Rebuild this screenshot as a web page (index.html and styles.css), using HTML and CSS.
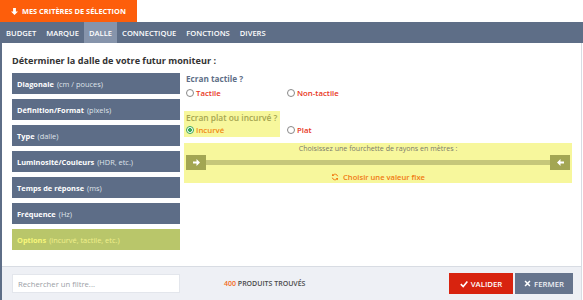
FILE: index.html
```html
<!DOCTYPE html>
<html>
<head>
    <meta charset="utf-8">
    <title>Mes critères de sélection</title>
    <link rel="stylesheet" href="styles.css">
</head>
<body>
    <div class="tab">
        <svg class="tab-icon" viewBox="0 0 10 10" width="7" height="7"><path d="M3 0h4v5h3L5 10 0 5h3z" fill="#fff"/></svg>
        MES CRITÈRES DE SÉLECTION
    </div>
    <nav class="nav">
        <a class="nav-item">BUDGET</a>
        <a class="nav-item">MARQUE</a>
        <a class="nav-item active">DALLE</a>
        <a class="nav-item">CONNECTIQUE</a>
        <a class="nav-item">FONCTIONS</a>
        <a class="nav-item">DIVERS</a>
    </nav>
    <div class="panel">
        <div class="content">
            <h2 class="title">Déterminer la dalle de votre futur moniteur :</h2>
            <div class="columns">
                <ul class="filters">
                    <li class="filter"><b>Diagonale</b> (cm / pouces)</li>
                    <li class="filter"><b>Définition/Format</b> (pixels)</li>
                    <li class="filter"><b>Type</b> (dalle)</li>
                    <li class="filter"><b>Luminosité/Couleurs</b> (HDR, etc.)</li>
                    <li class="filter"><b>Temps de réponse</b> (ms)</li>
                    <li class="filter"><b>Fréquence</b> (Hz)</li>
                    <li class="filter selected"><b>Options</b> (incurvé, tactile, etc.)</li>
                </ul>
                <div class="options">
                    <div class="question">
                        <div class="q-title">Ecran tactile ?</div>
                        <label class="choice"><span class="radio"></span>Tactile</label>
                        <label class="choice"><span class="radio"></span>Non-tactile</label>
                    </div>
                    <div class="question active">
                        <div class="q-title hl">Ecran plat ou incurvé ?</div>
                        <label class="choice hl"><span class="radio checked"></span>Incurvé</label>
                        <label class="choice"><span class="radio"></span>Plat</label>
                    </div>
                    <div class="range">
                        <div class="range-label">Choisissez une fourchette de rayons en mètres :</div>
                        <div class="slider">
                            <span class="handle"><svg viewBox="0 0 10 10" width="7" height="7"><path d="M0 3.5h5V0l5 5-5 5V6.5H0z" fill="#fff"/></svg></span>
                            <span class="track"></span>
                            <span class="handle"><svg viewBox="0 0 10 10" width="7" height="7"><path d="M10 3.5H5V0L0 5l5 5V6.5h5z" fill="#fff"/></svg></span>
                        </div>
                        <a class="fixed">
                            <svg viewBox="0 0 12 12" width="8" height="8"><path d="M10 5A4 4 0 0 0 3 3.2M2 7a4 4 0 0 0 7 1.8" fill="none" stroke="#f07a12" stroke-width="1.4"/><path d="M1.5 1v3.5H5z M10.5 11V7.5H7z" fill="#f07a12"/></svg>
                            Choisir une valeur fixe
                        </a>
                    </div>
                </div>
            </div>
        </div>
        <div class="footer">
            <input class="search" type="text" placeholder="Rechercher un filtre...">
            <div class="count"><span class="num">400</span> PRODUITS TROUVÉS</div>
            <div class="actions">
                <button class="btn btn-ok"><svg viewBox="0 0 10 10" width="8" height="8"><path d="M1 5.2l3 3L9.2 2" fill="none" stroke="#fff" stroke-width="2"/></svg>VALIDER</button>
                <button class="btn btn-close"><svg viewBox="0 0 10 10" width="7" height="7"><path d="M1.5 1.5l7 7M8.5 1.5l-7 7" stroke="#fff" stroke-width="2.2"/></svg>FERMER</button>
            </div>
        </div>
    </div>
</body>
</html>
```
FILE: styles.css
```css
body {
    margin: 0;
    font-family: "Open Sans", "Liberation Sans", sans-serif;
    background: #ffffff;
    color: #333;
}

.tab {
    display: flex;
    align-items: center;
    gap: 4px;
    width: 137px;
    height: 22px;
    box-sizing: border-box;
    padding-left: 11px;
    background-color: #fd5e0b;
    color: #fff;
    font-size: 7.4px;
    font-weight: 700;
    white-space: nowrap;
}

.nav {
    display: flex;
    height: 21px;
    padding-left: 1px;
    background-color: #5e6e87;
}

.nav-item {
    display: flex;
    align-items: center;
    padding: 0 5px;
    color: #fff;
    font-size: 7.6px;
    font-weight: 600;
}

.nav-item.active {
    background-color: #8694ab;
}

.panel {
    display: flex;
    flex-direction: column;
    height: 257px;
    border-left: 2px solid #5e6e87;
    border-right: 1px solid #d8dce3;
    width: 582px;
    box-sizing: border-box;
}

.content {
    flex: 1;
    padding: 11px 9px 0 10px;
}

.title {
    margin: 0 0 6px;
    font-size: 9.1px;
    font-weight: 700;
    color: #333;
}

.columns {
    display: grid;
    grid-template-columns: 168px 1fr;
    gap: 4px;
}

.filters {
    list-style: none;
    margin: 0;
    padding: 0;
    display: flex;
    flex-direction: column;
    gap: 5px;
}

.filter {
    display: flex;
    align-items: center;
    gap: 3px;
    height: 21px;
    padding-left: 5px;
    background-color: #5d6d87;
    color: #dfe3ea;
    font-size: 7.4px;
    white-space: nowrap;
}

.filter b {
    color: #fff;
    font-weight: 700;
}

.filter.selected {
    background-color: #b9c66a;
    color: #f0f08a;
}

.filter.selected b {
    color: #f7f77a;
}

.question {
    display: grid;
    grid-template-columns: 101px 1fr;
}

.q-title {
    grid-column: 1 / 3;
    height: 11px;
    line-height: 11px;
    padding: 0 2px;
    font-size: 8.2px;
    font-weight: 700;
    color: #5e6e87;
    white-space: nowrap;
}

.question.active {
    margin-top: 11px;
}

.question.active .q-title {
    height: 12px;
    line-height: 13px;
}

.hl {
    justify-self: start;
    width: 96px;
    box-sizing: border-box;
    background-color: #f7f79c;
}

.q-title.hl {
    color: #a5a550;
    font-weight: 600;
    font-size: 8.4px;
}

.choice {
    display: flex;
    align-items: center;
    gap: 2px;
    height: 14px;
    margin-top: 2px;
    padding-left: 2px;
    color: #e8341c;
    font-size: 7.8px;
    font-weight: 600;
    white-space: nowrap;
}

.question.active .choice {
    margin-top: 0;
}

.choice.hl {
    color: #f08a12;
}

.radio {
    width: 8px;
    height: 8px;
    border: 1px solid #888;
    border-radius: 50%;
    box-sizing: border-box;
    background: #fff;
}

.radio.checked {
    border-color: #3aa85c;
    background: radial-gradient(circle, #3aa85c 0 1.8px, #fff 2.2px);
}

.range {
    margin-top: 6px;
    height: 40px;
    background-color: #f7f79c;
    display: flex;
    flex-direction: column;
    align-items: center;
}

.range-label {
    font-size: 7.1px;
    line-height: 9px;
    color: #7a7a6a;
    margin-top: 1px;
    white-space: nowrap;
}

.slider {
    display: flex;
    align-items: center;
    align-self: stretch;
    margin-top: 2px;
    padding: 0 2px;
}

.handle {
    display: flex;
    align-items: center;
    justify-content: center;
    width: 20px;
    height: 15px;
    background-color: #a3a653;
}

.track {
    flex: 1;
    height: 5px;
    background-color: #c6c77a;
}

.fixed {
    display: flex;
    align-items: center;
    gap: 4px;
    height: 13px;
    color: #f07a12;
    font-size: 7.6px;
    font-weight: 600;
    white-space: nowrap;
}

.footer {
    display: flex;
    align-items: center;
    height: 33px;
    padding: 0 8px 0 10px;
    background-color: #eef0f5;
    border-top: 1px solid #d8dce3;
}

.search {
    width: 168px;
    height: 19px;
    box-sizing: border-box;
    border: 1px solid #e3e6ec;
    padding: 0 5px;
    font-family: inherit;
    font-size: 7.7px;
}

.search::placeholder {
    color: #9a9ea6;
}

.count {
    margin-left: 44px;
    font-size: 7px;
    font-weight: 600;
    color: #4a4a4a;
    white-space: nowrap;
}

.num {
    color: #f26a1b;
}

.actions {
    margin-left: auto;
    display: flex;
    gap: 2px;
}

.btn {
    display: flex;
    align-items: center;
    justify-content: center;
    gap: 3px;
    height: 21px;
    border: none;
    color: #fff;
    font-family: inherit;
    font-size: 7.8px;
    font-weight: 600;
}

.btn-ok {
    width: 64px;
    background-color: #d8230f;
}

.btn-close {
    width: 58px;
    background-color: #66748d;
    color: #eef0f4;
}
```
